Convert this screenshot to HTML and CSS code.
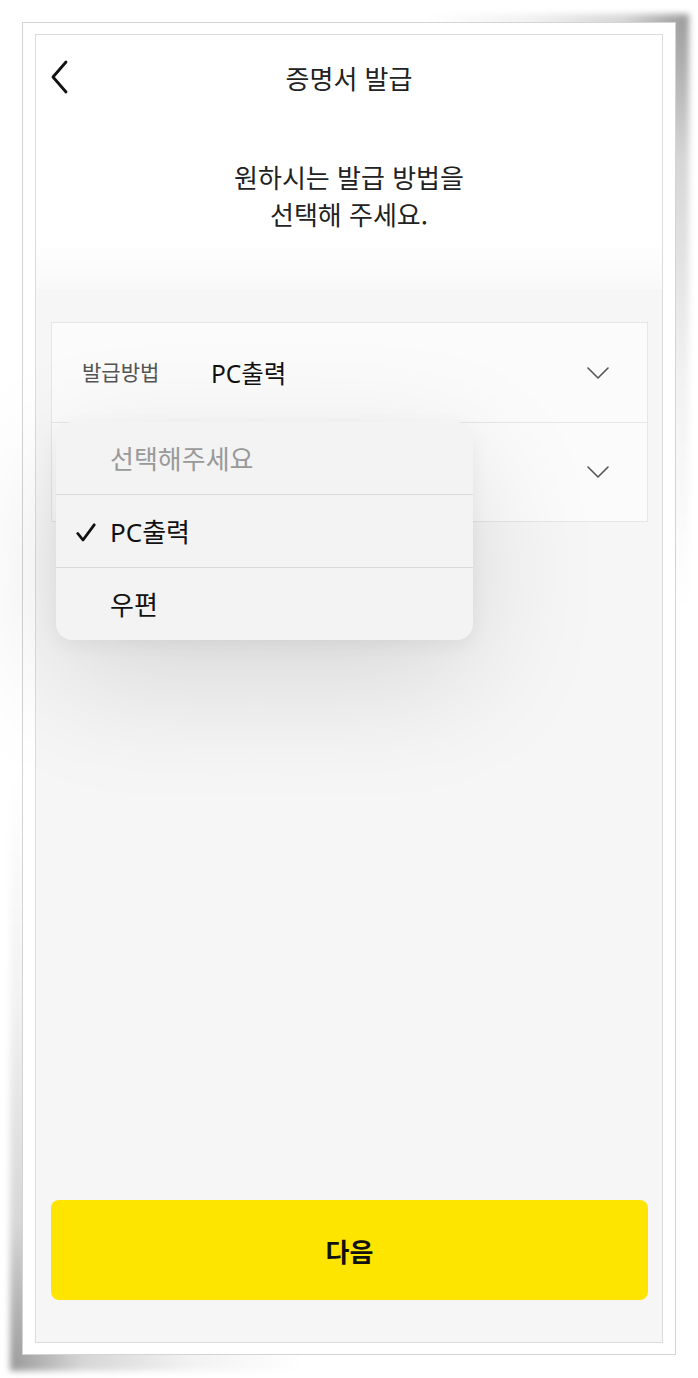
FILE: index.html
```html
<!DOCTYPE html>
<html lang="ko">
<head>
<meta charset="utf-8">
<title>증명서 발급</title>
<link rel="stylesheet" href="styles.css">
</head>
<body>
<div class="paper">
  <div class="screen">
    <header class="top">
      <div class="navbar">
        <button class="back" aria-label="뒤로">
          <svg width="20" height="34" viewBox="0 0 20 34"><path d="M16 2 L3 17 L16 32" fill="none" stroke="#111" stroke-width="2.8" stroke-linecap="round" stroke-linejoin="round"/></svg>
        </button>
        <h1 class="title">증명서 발급</h1>
      </div>
      <p class="lead">원하시는 발급 방법을<br>선택해 주세요.</p>
    </header>
    <main class="body">
      <div class="card">
        <div class="row">
          <span class="label">발급방법</span>
          <span class="value">PC출력</span>
          <svg class="chev" width="22" height="12" viewBox="0 0 22 12"><path d="M1 1 L11 11 L21 1" fill="none" stroke="#555" stroke-width="1.6" stroke-linecap="round" stroke-linejoin="round"/></svg>
        </div>
        <div class="row">
          <span class="label"></span>
          <span class="value"></span>
          <svg class="chev" width="22" height="12" viewBox="0 0 22 12"><path d="M1 1 L11 11 L21 1" fill="none" stroke="#555" stroke-width="1.6" stroke-linecap="round" stroke-linejoin="round"/></svg>
        </div>
        <ul class="menu">
          <li class="opt placeholder"><span class="mark"></span>선택해주세요</li>
          <li class="opt"><span class="mark"><svg width="20" height="19" viewBox="0 0 20 19"><path d="M1.8 10.5 L7 17 L18.2 1.8" fill="none" stroke="#111" stroke-width="2.8" stroke-linecap="round" stroke-linejoin="round"/></svg></span>PC출력</li>
          <li class="opt"><span class="mark"></span>우편</li>
        </ul>
      </div>
      <div class="spacer"></div>
      <button class="next">다음</button>
    </main>
  </div>
</div>
</body>
</html>
```

FILE: styles.css
```css
* { box-sizing: border-box; }
html { background: #fff; }
html, body { margin: 0; padding: 0; }
body {
  font-family: "Noto Sans", "Noto Sans CJK KR", sans-serif;
  color: #111;
  padding: 22px 0 0 22px;
  min-height: 1378px;
}
.paper {
  position: relative;
  width: 654px;
  height: 1333px;
  background: #fff;
  border: 1px solid #d4d4d4;
  padding: 11px 12px;
}
.paper::before {
  content: "";
  position: absolute;
  z-index: -1;
  top: -9px;
  right: -14px;
  width: 45%;
  height: 50%;
  background: radial-gradient(farthest-side at 100% 0%, rgba(0,0,0,0.4) 0%, rgba(0,0,0,0.16) 22%, rgba(0,0,0,0.05) 55%, rgba(0,0,0,0) 90%);
  filter: blur(3px);
}
.paper::after {
  content: "";
  position: absolute;
  z-index: -1;
  bottom: -17px;
  left: -13px;
  width: 50%;
  height: 50%;
  background: radial-gradient(farthest-side at 0% 100%, rgba(0,0,0,0.4) 0%, rgba(0,0,0,0.16) 22%, rgba(0,0,0,0.05) 55%, rgba(0,0,0,0) 90%);
  filter: blur(3px);
}
.screen {
  height: 100%;
  border: 1px solid #dcdcdc;
  display: flex;
  flex-direction: column;
  background: #f6f6f6;
}
.top {
  background: linear-gradient(#fff 0, #fff 205px, #f9f9f9 253px);
  height: 254px;
  display: flex;
  flex-direction: column;
}
.navbar {
  height: 84px;
  display: flex;
  align-items: center;
  position: relative;
}
.back {
  border: 0;
  background: none;
  padding: 0;
  margin-left: 14px;
  width: 24px;
  height: 34px;
  display: flex;
  align-items: center;
}
.title {
  position: absolute;
  left: 0;
  right: 0;
  text-align: center;
  margin: 0;
  font-family: "Noto Sans CJK KR", sans-serif;
  font-size: 26px;
  font-weight: 400;
  color: #222;
  pointer-events: none;
}
.lead {
  margin: 39px 0 0;
  text-align: center;
  font-family: "Noto Sans CJK KR", sans-serif;
  font-size: 26px;
  line-height: 37px;
  color: #222;
}
.body {
  flex: 1;
  display: flex;
  flex-direction: column;
  padding: 33px 14px 42px 15px;
}
.card {
  position: relative;
  background: #fbfbfb;
  border: 1px solid #e6e6e6;
}
.row {
  height: 99px;
  display: flex;
  align-items: center;
  padding: 0 38px 0 30px;
}
.row + .row { border-top: 1px solid #e6e6e6; }
.label {
  width: 129px;
  font-family: "Noto Sans CJK KR", sans-serif;
  font-size: 21px;
  color: #555;
  margin-top: -4px;
}
.value {
  flex: 1;
  font-size: 24.5px;
  color: #111;
}
.chev { flex: none; }
.menu {
  position: absolute;
  left: 4px;
  top: 99px;
  width: 417px;
  margin: 0;
  padding: 0;
  list-style: none;
  background: #f3f3f3;
  border-radius: 16px;
  box-shadow: 0 40px 130px rgba(0,0,0,0.13), 0 6px 20px rgba(0,0,0,0.05);
  overflow: hidden;
}
.opt {
  height: 73px;
  display: flex;
  align-items: center;
  font-size: 26px;
  color: #111;
  padding-left: 20px;
}
.opt + .opt { border-top: 1px solid #dadada; }
.opt.placeholder { color: #999; height: 72px; }
.mark {
  width: 34px;
  display: flex;
  align-items: center;
  padding-top: 2px;
}
.spacer { flex: 1; }
.next {
  height: 100px;
  border: 0;
  border-radius: 8px;
  background: #fee500;
  font-family: "Noto Sans CJK KR", sans-serif;
  font-size: 26px;
  font-weight: 700;
  color: #111;
}
```
